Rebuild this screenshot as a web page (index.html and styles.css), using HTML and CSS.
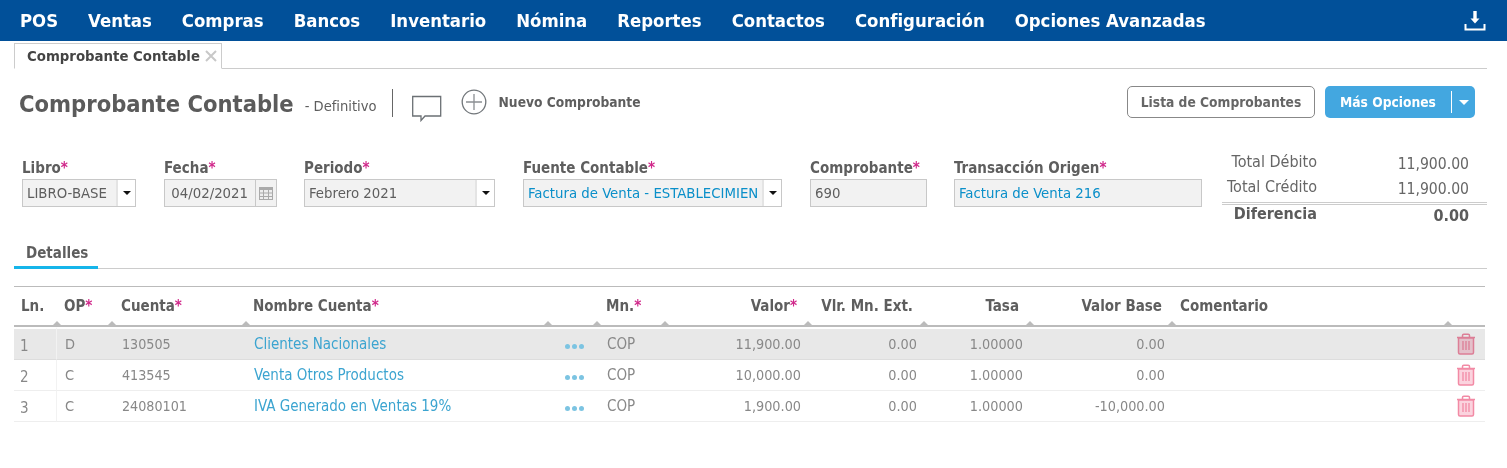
FILE: index.html
```html
<!DOCTYPE html>
<html lang="es">
<head>
	<meta charset="UTF-8">
	<meta name="viewport" content="width=device-width, initial-scale=1.0">
	<title>Comprobante Contable</title>
	<link rel="stylesheet" href="styles.css">
</head>
<body>
<nav class="topbar">
	<ul class="menu">
		<li>POS</li>
		<li>Ventas</li>
		<li>Compras</li>
		<li>Bancos</li>
		<li>Inventario</li>
		<li>Nómina</li>
		<li>Reportes</li>
		<li>Contactos</li>
		<li>Configuración</li>
		<li>Opciones Avanzadas</li>
	</ul>
	<svg class="download" width="22" height="22" viewBox="0 0 22 22">
		<path d="M11 1v9" stroke="#fff" stroke-width="3.4" fill="none"/>
		<path d="M6.5 8.5h9L11 13.5z" fill="#fff"/>
		<path d="M1.5 14v5.5h19V14" stroke="#fff" stroke-width="2" fill="none"/>
	</svg>
</nav>

<div class="tabbar">
	<div class="tab">
		<span>Comprobante Contable</span>
		<svg class="tab-close" width="12" height="12" viewBox="0 0 12 12">
			<path d="M1 1l10 10M11 1L1 11" stroke="#c8c8c8" stroke-width="2"/>
		</svg>
	</div>
</div>

<header class="head">
	<h1 class="title">Comprobante Contable</h1>
	<span class="status">- Definitivo</span>
	<span class="divider"></span>
	<svg class="comment-icon" width="30" height="27" viewBox="0 0 30 27">
		<path d="M.7 1.5h28v19.500H13l-4 4.500v-4.500H.7z" fill="#fff" stroke="#6b7074" stroke-width="1.300"/>
	</svg>
	<svg class="plus-icon" width="26" height="26" viewBox="0 0 26 26">
		<circle cx="13" cy="13" r="11.800" fill="none" stroke="#71767a" stroke-width="1.300"/>
		<path d="M13 5v16M5 13h16" stroke="#8b8f93" stroke-width="1.300"/>
	</svg>
	<span class="new-link">Nuevo Comprobante</span>
	<div class="head-actions">
		<button class="btn-outline">Lista de Comprobantes</button>
		<div class="btn-main">
			<span class="btn-main-label">Más Opciones</span>
			<span class="btn-main-caret"></span>
		</div>
	</div>
</header>

<section class="form-row">
	<div class="fields">
		<div class="field f-libro">
			<label>Libro<i>*</i></label>
			<div class="control">
				<span class="value">LIBRO-BASE</span>
				<span class="select-btn"><b></b></span>
			</div>
		</div>
		<div class="field f-fecha">
			<label>Fecha<i>*</i></label>
			<div class="control">
				<span class="value date">04/02/2021</span>
				<span class="date-btn">
					<svg width="14" height="13" viewBox="0 0 14 13">
						<path d="M0 0h14v13H0z" fill="#aaa"/>
						<path d="M1 3h3v2.500H1zM5 3h4v2.500H5zM10 3h3v2.500h-3zM1 6.500h3V9H1zM5 6.500h4V9H5zM10 6.500h3V9h-3zM1 10h3v2H1zM5 10h4v2H5zM10 10h3v2h-3z" fill="#eee"/>
					</svg>
				</span>
			</div>
		</div>
		<div class="field f-periodo">
			<label>Periodo<i>*</i></label>
			<div class="control">
				<span class="value">Febrero 2021</span>
				<span class="select-btn"><b></b></span>
			</div>
		</div>
		<div class="field f-fuente">
			<label>Fuente Contable<i>*</i></label>
			<div class="control">
				<span class="value link">Factura de Venta - ESTABLECIMIENTO</span>
				<span class="select-btn"><b></b></span>
			</div>
		</div>
		<div class="field f-comp">
			<label>Comprobante<i>*</i></label>
			<div class="control">
				<span class="value">690</span>
			</div>
		</div>
		<div class="field f-origen">
			<label>Transacción Origen<i>*</i></label>
			<div class="control">
				<span class="value link">Factura de Venta 216</span>
			</div>
		</div>
	</div>
	<div class="totals">
		<div class="total-row">
			<span class="total-label">Total Débito</span>
			<span class="total-num">11,900.00</span>
		</div>
		<div class="total-row total-second">
			<span class="total-label">Total Crédito</span>
			<span class="total-num">11,900.00</span>
		</div>
		<div class="total-row total-diff">
			<span class="total-label">Diferencia</span>
			<span class="total-num">0.00</span>
		</div>
	</div>
</section>

<div class="subtabs">
	<div class="subtab">Detalles</div>
</div>

<table class="grid">
	<colgroup>
		<col class="c-ln"><col class="c-op"><col class="c-cta"><col class="c-nom"><col class="c-dots"><col class="c-mn">
		<col class="c-val"><col class="c-ext"><col class="c-tasa"><col class="c-base"><col class="c-com"><col class="c-del">
	</colgroup>
	<thead>
		<tr>
			<th class="mark">Ln.</th>
			<th class="mark">OP<i>*</i></th>
			<th class="mark">Cuenta<i>*</i></th>
			<th class="mark">Nombre Cuenta<i>*</i></th>
			<th class="mark"></th>
			<th class="mark">Mn.<i>*</i></th>
			<th class="mark num">Valor<i>*</i></th>
			<th class="mark num">Vlr. Mn. Ext.</th>
			<th class="mark num">Tasa</th>
			<th class="mark num">Valor Base</th>
			<th class="mark">Comentario</th>
			<th></th>
		</tr>
	</thead>
	<tbody id="rows"></tbody>
</table>

<script type="text/javascript">
(function () {
	let rows = [
		['1', 'D', '130505', 'Clientes Nacionales', '11,900.00', '0.00'],
		['2', 'C', '413545', 'Venta Otros Productos', '10,000.00', '0.00'],
		['3', 'C', '24080101', 'IVA Generado en Ventas 19%', '1,900.00', '-10,000.00']
	],
	trash = '<svg width="20" height="22" viewBox="0 0 20 22">' +
		'<path d="M1 4.500h18M6.500 4V2.500q0-1.300 1.300-1.300h4.400q1.300 0 1.300 1.300V4" fill="none" stroke="#f28aa5" stroke-width="1.500"/>' +
		'<path d="M2.500 5h15v14.500q0 1.500-1.500 1.500H4q-1.500 0-1.500-1.500z" fill="#fbd3de" stroke="#f28aa5" stroke-width="1.500"/>' +
		'<path d="M7 8v9M10 8v9M13 8v9" stroke="#f28aa5" stroke-width="1.300"/></svg>',
	tbody = document.getElementById('rows');

	for (let i = 0; i < rows.length; i += 1) {
		let r = rows[i],
			tr = document.createElement('tr');

		if (i === 0) {
			tr.className = 'active';
		}
		tr.innerHTML = '<td class="ln">' + r[0] + '</td><td class="op">' + r[1] + '</td><td class="cta">' + r[2] + '</td>' +
			'<td class="nom">' + r[3] + '</td><td class="dots"><span></span><span></span><span></span></td><td class="mn">COP</td>' +
			'<td class="num">' + r[4] + '</td><td class="num">0.00</td><td class="num">1.00000</td><td class="num">' + r[5] + '</td>' +
			'<td></td><td class="del">' + trash + '</td>';
		tbody.appendChild(tr);
	}
}) ();
</script>
</body>
</html>
```

FILE: styles.css
```css
* {
	box-sizing: border-box;
}
body {
	margin: 0;
	background: #fff;
	color: #5e5e5e;
	font-family: "DejaVu Sans Condensed", "DejaVu Sans", sans-serif;
	font-stretch: condensed;
	font-size: 14px;
}

/* top menu */
.topbar {
	height: 41px;
	background: #015099;
	display: flex;
	align-items: center;
	justify-content: space-between;
	padding: 0 21px 0 20px;
}
.menu {
	display: flex;
	gap: 30px;
	margin: 0;
	padding: 0;
	list-style: none;
	color: #fff;
	font-size: 18.4px;
	font-weight: bold;
}
.download {
	display: block;
	margin-top: 1px;
}

/* page tab */
.tabbar {
	margin: 2px 20px 0 14px;
	height: 26px;
	border-bottom: 1px solid #ccc;
}
.tab {
	display: flex;
	align-items: center;
	gap: 5px;
	width: 208px;
	height: 26px;
	padding: 0 0 1px 12px;
	border: 1px solid #ccc;
	border-bottom-color: #fff;
	color: #444;
	font-size: 14.8px;
	font-weight: bold;
	white-space: nowrap;
}
.tab-close {
	flex: none;
}

/* heading */
.head {
	display: flex;
	align-items: center;
	height: 34px;
	margin: 18px 32px 0 19px;
}
.title {
	margin: 0;
	font-size: 23.5px;
	font-weight: bold;
	color: #5b5b5b;
}
.status {
	margin: 3px 0 0 11px;
	font-size: 14.6px;
}
.divider {
	width: 1px;
	height: 28px;
	margin: -3px 19px 0 15px;
	background: #666;
}
.comment-icon {
	margin-top: 8px;
}
.plus-icon {
	margin: -5px 0 0 19px;
}
.new-link {
	margin: -4px 0 0 12px;
	font-size: 13.7px;
	font-weight: bold;
}
.head-actions {
	display: flex;
	gap: 10px;
	margin: 0 0 4px auto;
}
.btn-outline {
	width: 188px;
	height: 32px;
	padding: 0;
	border: 1px solid #888;
	border-radius: 5px;
	background: #fff;
	color: #666;
	font: inherit;
	font-weight: bold;
	font-size: 13.7px;
}
.btn-main {
	width: 150px;
	height: 32px;
	display: flex;
	align-items: center;
	background: #43a7e0;
	border-radius: 5px;
	color: #fff;
	font-weight: bold;
	font-size: 13.7px;
}
.btn-main-label {
	width: 127px;
	height: 22px;
	line-height: 22px;
	text-align: center;
	border-right: 1px solid #fff;
}
.btn-main-caret {
	margin-left: 7px;
	border: 5px solid transparent;
	border-top-color: #fff;
	border-bottom-width: 0;
}

/* form */
.form-row {
	display: flex;
	justify-content: space-between;
	margin: 0 20px 0 22px;
	height: 117px;
}
.fields {
	display: flex;
	gap: 28px;
	padding-top: 39px;
}
.field label {
	display: block;
	height: 19px;
	line-height: 17px;
	font-weight: bold;
	font-size: 15px;
}
i {
	font-style: normal;
	color: #d0288a;
}
.control {
	display: flex;
	height: 28px;
	border: 1px solid #c8c8c8;
	background: #f2f2f2;
	line-height: 26px;
	font-size: 14.8px;
}
.value {
	flex: 1;
	min-width: 0;
	overflow: hidden;
	white-space: nowrap;
	margin: 0 4px;
}
.value.date {
	text-align: right;
	margin-right: 7px;
}
.link {
	color: #0a8fc9;
}
.select-btn {
	flex: none;
	width: 19px;
	background: #fff;
	border-left: 2px solid #e4e4e4;
	display: flex;
	align-items: center;
	justify-content: center;
}
.select-btn b {
	border: 4px solid transparent;
	border-top-color: #111;
	border-bottom-width: 0;
}
.date-btn {
	flex: none;
	width: 21px;
	border-left: 1px solid #c8c8c8;
	display: flex;
	align-items: center;
	justify-content: center;
}
.date-btn svg {
	display: block;
}
.f-libro { width: 114px; }
.f-fecha { width: 113px; margin-right: -1px; }
.f-periodo { width: 191px; }
.f-fuente { width: 259px; }
.f-comp { width: 117px; margin-right: -1px; }
.f-origen { width: 248px; }

/* totals */
.totals {
	width: 265px;
	padding-top: 30px;
}
.total-row {
	display: flex;
	align-items: flex-start;
	height: 25px;
	line-height: 25px;
	color: #666;
	font-size: 16px;
}
.total-second {
	height: 26px;
}
.total-label {
	width: 95px;
	margin-top: -2px;
	text-align: right;
	white-space: nowrap;
}
.total-num {
	width: 152px;
	margin-top: 1px;
	text-align: right;
	font-size: 15.6px;
}
.total-diff {
	border-top: 3px double #ccc;
	line-height: 20px;
	font-weight: bold;
	color: #5b5b5b;
}
.total-diff .total-label {
	margin-top: -1px;
}
.total-diff .total-num {
	font-size: 16px;
}

/* detail tab */
.subtabs {
	margin: 0 20px 0 14px;
	height: 31px;
	border-bottom: 1px solid #ccc;
}
.subtab {
	width: 84px;
	height: 31px;
	padding: 6px 0 0 12px;
	border-bottom: 3px solid #16b5ea;
	font-weight: bold;
	font-size: 15px;
}

/* grid */
.grid {
	width: 1471px;
	margin: 17px 0 0 14px;
	border-collapse: separate;
	border-spacing: 0;
	table-layout: fixed;
}
.c-ln { width: 43px; }
.c-op { width: 55px; }
.c-cta { width: 134px; }
.c-nom { width: 302px; }
.c-dots { width: 49px; }
.c-mn { width: 68px; }
.c-val { width: 143px; }
.c-ext { width: 116px; }
.c-tasa { width: 106px; }
.c-base { width: 142px; }
.c-com { width: 276px; }
.c-del { width: 37px; }
.grid th {
	position: relative;
	height: 41px;
	padding: 0 0 1px 7px;
	border-top: 1px solid #bbb;
	border-bottom: 2px solid #bbb;
	text-align: left;
	font-size: 15px;
	white-space: nowrap;
}
.grid th.mark::after {
	content: "";
	position: absolute;
	right: -4px;
	bottom: 0;
	border: 4px solid transparent;
	border-bottom-color: #bbb;
	border-top-width: 0;
}
.grid th.num {
	text-align: right;
	padding-right: 11px;
}
.grid th:nth-child(3) {
	padding-left: 9px;
}
.grid th:nth-child(6) {
	padding-left: 9px;
}
.grid th:nth-child(10) {
	padding-right: 10px;
}
.grid th:nth-child(11) {
	padding-left: 8px;
}
.grid td {
	height: 31px;
	padding: 0 0 0 8px;
	border-bottom: 1px solid #eee;
	color: #888;
	font-size: 14.5px;
	white-space: nowrap;
}
.grid tbody tr:first-child td {
	height: 33px;
	border-top: 2px solid #fff;
}
.grid tr.active td {
	background: #e8e8e8;
	border-bottom-color: #ddd;
	padding-bottom: 1px;
}
.grid td.ln {
	padding: 4px 0 0 6px;
	border-right: 1px solid #f2f2f2;
	font-size: 15px;
}
.grid td.cta {
	padding-left: 10px;
	font-size: 14.2px;
}
.grid td.mn {
	padding-left: 10px;
	font-size: 15px;
}
.grid td.nom {
	color: #3ba4d0;
	font-size: 15px;
}
.grid td.num {
	text-align: right;
	padding-right: 7px;
	font-size: 14.3px;
}
.grid td.dots {
	padding-left: 17px;
}
.dots span {
	display: inline-block;
	width: 5px;
	height: 5px;
	margin-right: 2px;
	border-radius: 50%;
	background: #7cc4e2;
}
.grid td.del {
	padding: 0 0 0 8px;
}
.del svg {
	display: block;
	mix-blend-mode: multiply;
}
```
